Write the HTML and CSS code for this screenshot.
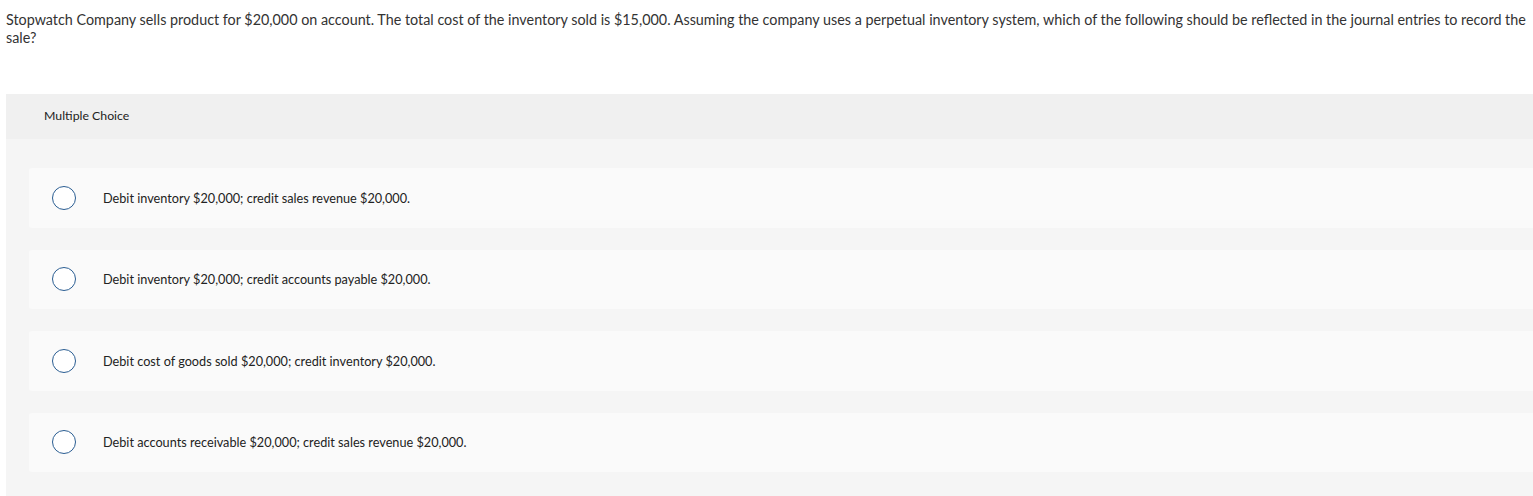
FILE: index.html
```html
<!DOCTYPE html>
<html lang="en">
<head>
<meta charset="utf-8">
<title>Multiple Choice</title>
<link rel="stylesheet" href="styles.css">
</head>
<body>
<div class="page">
  <p class="question">Stopwatch Company sells product for $20,000 on account. The total cost of the inventory sold is $15,000. Assuming the company uses a perpetual inventory system, which of the following should be reflected in the journal entries to record the sale?</p>
  <section class="panel">
    <header class="panel-head">Multiple Choice</header>
    <div class="choices">
      <label class="choice"><span class="radio"></span><span class="choice-text">Debit inventory $20,000; credit sales revenue $20,000.</span></label>
      <label class="choice"><span class="radio"></span><span class="choice-text">Debit inventory $20,000; credit accounts payable $20,000.</span></label>
      <label class="choice"><span class="radio"></span><span class="choice-text">Debit cost of goods sold $20,000; credit inventory $20,000.</span></label>
      <label class="choice"><span class="radio"></span><span class="choice-text">Debit accounts receivable $20,000; credit sales revenue $20,000.</span></label>
    </div>
  </section>
</div>
</body>
</html>
```
FILE: styles.css
```css
html, body {
  margin: 0;
  padding: 0;
  background: #ffffff;
}
body {
  font-family: Lato, "Liberation Sans", Arial, sans-serif;
  color: #2b2b2b;
  overflow: hidden;
}
.page {
  padding-left: 6px;
}
.question {
  margin: 0;
  padding: 11px 6px 0 0;
  font-size: 14.35px;
  line-height: 18px;
  color: #333333;
}
.panel {
  margin-top: 47px;
  background: #f5f5f5;
  padding-bottom: 24px;
}
.panel-head {
  height: 42px;
  padding-bottom: 3px;
  background: #f0f0f0;
  display: flex;
  align-items: center;
  padding-left: 38px;
  font-size: 12.3px;
  color: #222222;
}
.choices {
  display: flex;
  flex-direction: column;
  gap: 22px;
  padding: 29px 0 0 23px;
}
.choice {
  height: 59.5px;
  background: #fafafa;
  border-radius: 3px 0 0 3px;
  display: flex;
  align-items: center;
}
.radio {
  width: 22px;
  height: 22px;
  border: 1.5px solid #2a5d92;
  border-radius: 50%;
  margin-left: 23px;
  flex: none;
  background: #ffffff;
}
.choice-text {
  margin-left: 27px;
  font-size: 12.7px;
  color: #222222;
}
```
